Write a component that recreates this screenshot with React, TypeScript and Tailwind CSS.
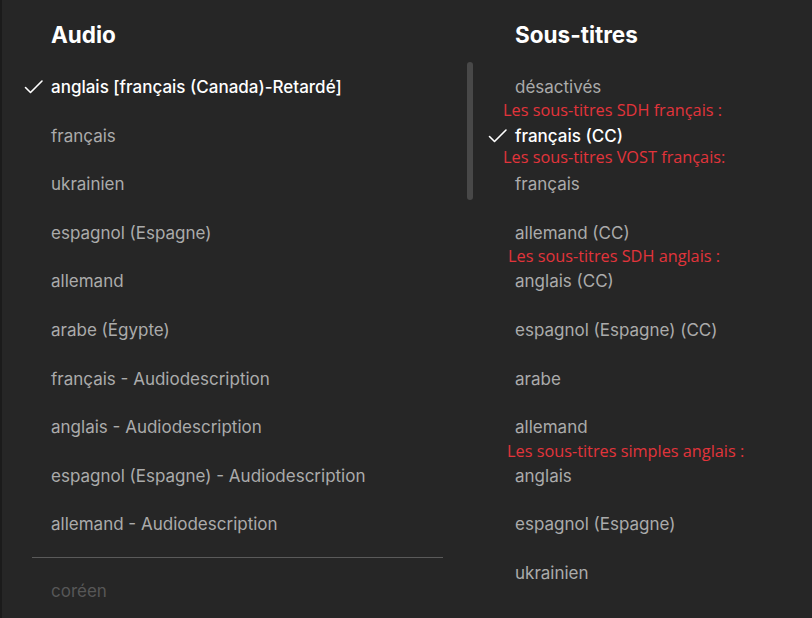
import React from "react";

const audio = [
  "anglais [français (Canada)-Retardé]",
  "français",
  "ukrainien",
  "espagnol (Espagne)",
  "allemand",
  "arabe (Égypte)",
  "français - Audiodescription",
  "anglais - Audiodescription",
  "espagnol (Espagne) - Audiodescription",
  "allemand - Audiodescription",
];

const subs = [
  "désactivés",
  "français (CC)",
  "français",
  "allemand (CC)",
  "anglais (CC)",
  "espagnol (Espagne) (CC)",
  "arabe",
  "allemand",
  "anglais",
  "espagnol (Espagne)",
  "ukrainien",
];

// annotations rouges posées par-dessus la liste
const notes = [
  { top: 100, left: 21, text: "Les sous-titres SDH français :" },
  { top: 147, left: 21, text: "Les sous-titres VOST français:" },
  { top: 246, left: 26, text: "Les sous-titres SDH anglais :" },
  { top: 441, left: 25, text: "Les sous-titres simples anglais :" },
];

function Check() {
  return (
    <svg
      className="absolute left-[-27px] top-1/2 -translate-y-1/2"
      width="20"
      height="16"
      viewBox="0 0 20 16"
      fill="none"
      stroke="white"
      strokeWidth={1.6}
      strokeLinecap="round"
      strokeLinejoin="round"
      aria-hidden="true"
    >
      <path d="M1.5 8.5 L6.5 13.5 L18 2" />
    </svg>
  );
}

function Row({ label, selected }: { label: string; selected?: boolean }) {
  return (
    <div className="h-[48.6px] flex items-center">
      <span
        className={
          selected
            ? "relative text-white font-medium"
            : "relative text-[#ababab]"
        }
      >
        {selected && <Check />}
        {label}
      </span>
    </div>
  );
}

export default function App() {
  return (
    <div
      className="w-[812px] h-[618px] overflow-hidden bg-[#262626] border-l-2 border-[#1b1b1b] flex text-[17px] leading-none"
      style={{ fontFamily: "Inter, 'Noto Sans', sans-serif" }}
    >
      {/* Audio */}
      <div className="w-[462px] shrink-0 pt-[24px]">
        <h2 className="pl-[49px] h-[22px] flex items-center text-white text-[22.5px] font-bold">
          Audio
        </h2>
        <div className="pl-[49px] mt-[17.2px]">
          {audio.map((a, i) => (
            <Row key={a} label={a} selected={i === 0} />
          ))}
        </div>
        <div className="ml-[30px] w-[411px] h-px bg-[#5a5a5a] mt-[8px]" />
        <div className="pl-[49px] h-[66px] flex items-center text-[#575757]">
          coréen
        </div>
      </div>

      {/* scrollbar */}
      <div className="w-[18px] shrink-0 pt-[62px] pl-[3px]">
        <div className="w-[6px] h-[138px] rounded-full bg-[#484848]" />
      </div>

      {/* Sous-titres */}
      <div className="relative flex-1 pt-[24px]">
        <h2 className="pl-[33px] h-[22px] flex items-center text-white text-[22.5px] font-bold">
          Sous-titres
        </h2>
        <div className="pl-[33px] mt-[17.2px]">
          {subs.map((s, i) => (
            <Row key={s + i} label={s} selected={i === 1} />
          ))}
        </div>
        {notes.map((n) => (
          <div
            key={n.text}
            className="absolute text-[#e2343b] text-[16.3px] leading-[20px] whitespace-nowrap"
            style={{ top: n.top, left: n.left, fontFamily: "'Open Sans', sans-serif" }}
          >
            {n.text}
          </div>
        ))}
      </div>
    </div>
  );
}
